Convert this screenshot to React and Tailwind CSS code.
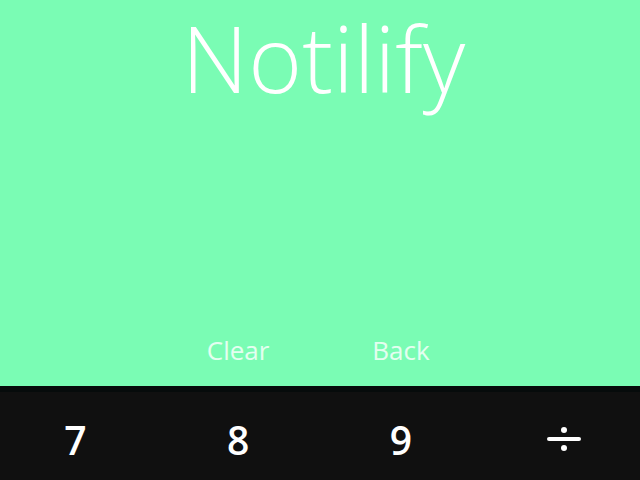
export default function App() {
  const keys = ['7', '8', '9']
  return (
    <div className="h-[480px] w-[640px] overflow-hidden flex flex-col" style={{ fontFamily: '"Open Sans", "Noto Sans", sans-serif' }}>
      <div className="h-[386px] bg-[#7afcb4] flex flex-col">
        <h1 className="text-center text-[92px] leading-[1.25] font-light text-white pl-[7px]">Notilify</h1>
        <div className="mt-auto mb-[23px] grid grid-cols-4 w-[651px] -ml-[6px] text-[26px] leading-none text-white/80">
          <div />
          <button type="button" className="text-center">Clear</button>
          <button type="button" className="text-center">Back</button>
          <div />
        </div>
      </div>
      <div className="flex-1 bg-[#101010] border-t-[6px] border-[#060b0b]">
        <div className="pt-[27px] grid grid-cols-4 w-[651px] -ml-[6px] text-[39px] leading-none font-semibold text-white">
          {keys.map((k) => (
            <button key={k} type="button" className="text-center">{k}</button>
          ))}
          <button type="button" className="flex flex-col items-center justify-center gap-[4px] h-[40px]">
            <span className="w-[6px] h-[6px] rounded-full bg-white" />
            <span className="w-[34px] h-[4px] rounded-full bg-white" />
            <span className="w-[6px] h-[6px] rounded-full bg-white" />
          </button>
        </div>
      </div>
    </div>
  )
}
